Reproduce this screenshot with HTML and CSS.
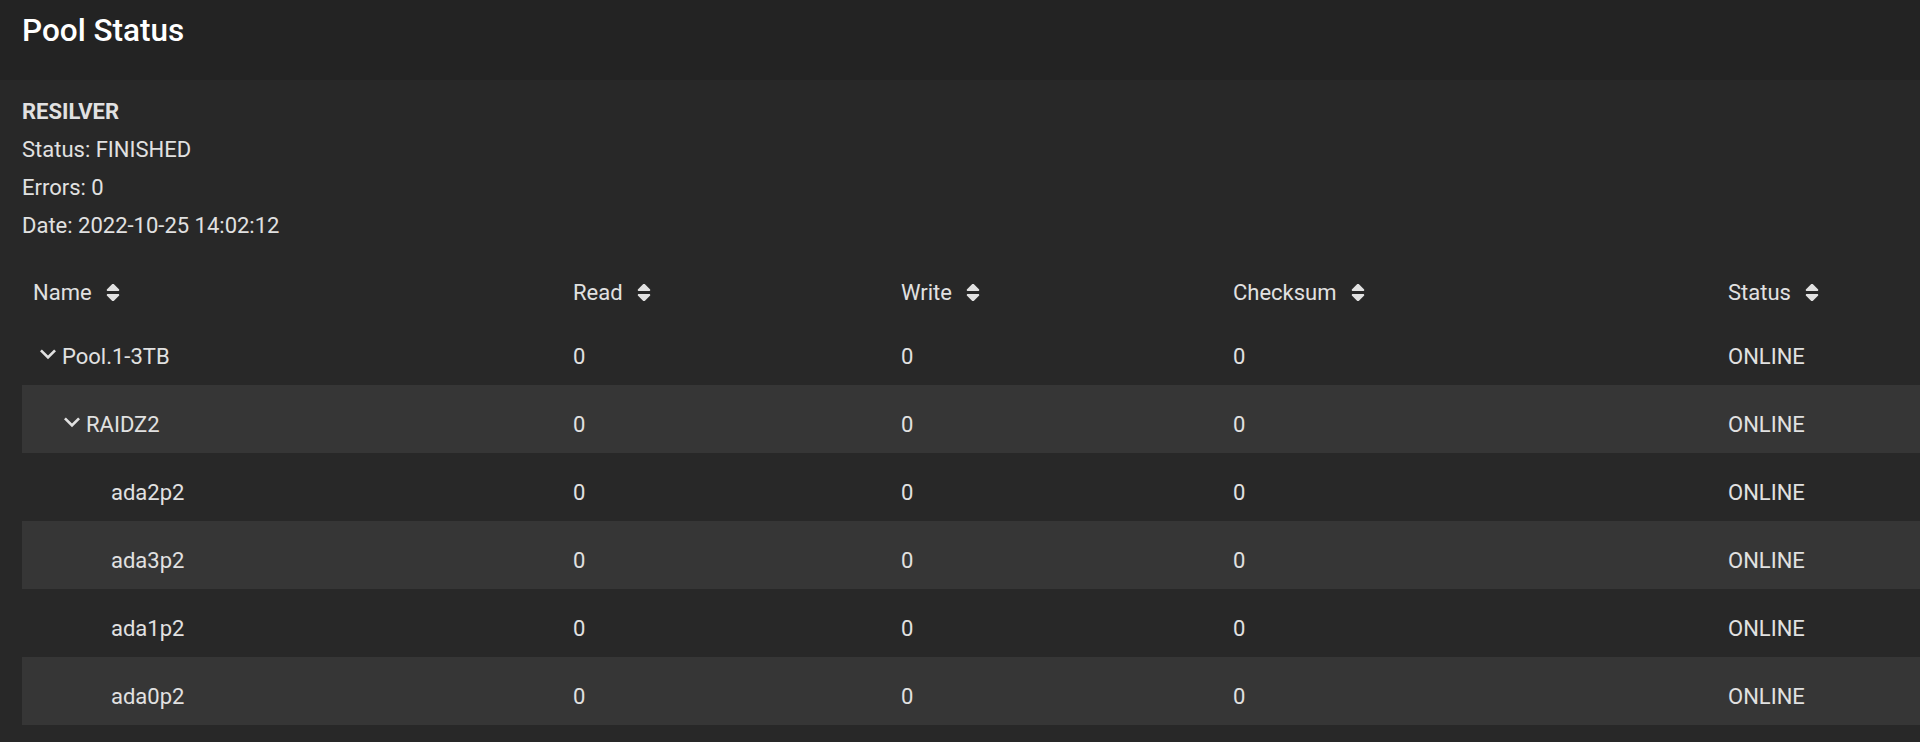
FILE: index.html
```html
<!DOCTYPE html>
<html lang="en">
<head>
<meta charset="utf-8">
<title>Pool Status</title>
<link rel="stylesheet" href="styles.css">
</head>
<body>
<header class="topbar">
  <h1 class="title">Pool Status</h1>
</header>
<main class="content">
  <section class="scan">
    <div class="scan-type">RESILVER</div>
    <div class="scan-line">Status: FINISHED</div>
    <div class="scan-line">Errors: 0</div>
    <div class="scan-line">Date: 2022-10-25 14:02:12</div>
  </section>
  <div class="table">
    <div class="row head">
      <div class="cell">Name<svg class="sort" viewBox="0 64 320 384"><path d="M41 288h238c21.4 0 32.1 25.9 17 41L177 448c-9.4 9.4-24.6 9.4-33.900 0L24 329c-15.1-15.1-4.4-41 17-41zm255-105L177 64c-9.4-9.4-24.6-9.4-33.9 0L24 183c-15.1 15.1-4.4 41 17 41h238c21.4 0 32.1-25.9 17-41z"/></svg></div>
      <div class="cell">Read<svg class="sort" viewBox="0 64 320 384"><path d="M41 288h238c21.4 0 32.1 25.9 17 41L177 448c-9.4 9.4-24.6 9.4-33.900 0L24 329c-15.1-15.1-4.4-41 17-41zm255-105L177 64c-9.4-9.4-24.6-9.4-33.9 0L24 183c-15.1 15.1-4.4 41 17 41h238c21.4 0 32.1-25.9 17-41z"/></svg></div>
      <div class="cell">Write<svg class="sort" viewBox="0 64 320 384"><path d="M41 288h238c21.4 0 32.1 25.9 17 41L177 448c-9.4 9.4-24.6 9.4-33.900 0L24 329c-15.1-15.1-4.4-41 17-41zm255-105L177 64c-9.4-9.4-24.6-9.4-33.9 0L24 183c-15.1 15.1-4.4 41 17 41h238c21.4 0 32.1-25.9 17-41z"/></svg></div>
      <div class="cell">Checksum<svg class="sort" viewBox="0 64 320 384"><path d="M41 288h238c21.4 0 32.1 25.9 17 41L177 448c-9.4 9.4-24.6 9.4-33.900 0L24 329c-15.1-15.1-4.4-41 17-41zm255-105L177 64c-9.4-9.4-24.6-9.4-33.9 0L24 183c-15.1 15.1-4.4 41 17 41h238c21.4 0 32.1-25.9 17-41z"/></svg></div>
      <div class="cell">Status<svg class="sort" viewBox="0 64 320 384"><path d="M41 288h238c21.4 0 32.1 25.9 17 41L177 448c-9.4 9.4-24.6 9.4-33.900 0L24 329c-15.1-15.1-4.4-41 17-41zm255-105L177 64c-9.4-9.4-24.6-9.4-33.9 0L24 183c-15.1 15.1-4.4 41 17 41h238c21.4 0 32.1-25.9 17-41z"/></svg></div>
    </div>

    <div class="row">
      <div class="cell name lvl0"><svg class="chev" viewBox="0 0 24 24"><path d="M16.59 8.59L12 13.17 7.41 8.59 6 10l6 6 6-6z"/></svg>Pool.1-3TB</div>
      <div class="cell">0</div><div class="cell">0</div><div class="cell">0</div><div class="cell">ONLINE</div>
    </div>
    <div class="row alt">
      <div class="cell name lvl1"><svg class="chev" viewBox="0 0 24 24"><path d="M16.59 8.59L12 13.17 7.41 8.59 6 10l6 6 6-6z"/></svg>RAIDZ2</div>
      <div class="cell">0</div><div class="cell">0</div><div class="cell">0</div><div class="cell">ONLINE</div>
    </div>
    <div class="row">
      <div class="cell name lvl2"><span class="spacer"></span>ada2p2</div>
      <div class="cell">0</div><div class="cell">0</div><div class="cell">0</div><div class="cell">ONLINE</div>
    </div>
    <div class="row alt">
      <div class="cell name lvl2"><span class="spacer"></span>ada3p2</div>
      <div class="cell">0</div><div class="cell">0</div><div class="cell">0</div><div class="cell">ONLINE</div>
    </div>
    <div class="row">
      <div class="cell name lvl2"><span class="spacer"></span>ada1p2</div>
      <div class="cell">0</div><div class="cell">0</div><div class="cell">0</div><div class="cell">ONLINE</div>
    </div>
    <div class="row alt">
      <div class="cell name lvl2"><span class="spacer"></span>ada0p2</div>
      <div class="cell">0</div><div class="cell">0</div><div class="cell">0</div><div class="cell">ONLINE</div>
    </div>
  </div>
</main>
</body>
</html>
```

FILE: styles.css
```css
html, body {
  margin: 0;
  padding: 0;
}

body {
  background: #282828;
  color: #e1e1e1;
  font-family: Roboto, "Liberation Sans", sans-serif;
  font-size: 22px;
  height: 742px;
  overflow: hidden;
}

.topbar {
  background: #232323;
  height: 80px;
  padding: 13px 22px 0;
  box-sizing: border-box;
}

.title {
  margin: 0;
  font-size: 31.5px;
  font-weight: 500;
  line-height: 36px;
  color: #ffffff;
}

.content {
  padding-top: 13px;
}

.scan {
  padding: 0 22px 4px;
}

.scan-type,
.scan-line {
  line-height: 38px;
}

.scan-type {
  font-weight: 700;
  font-size: 22px;
}

.table {
  margin-left: 22px;
}

.row {
  display: grid;
  grid-template-columns: 540px 328px 332px 495px 1fr;
  height: 68px;
}

.row.alt {
  background: #363636;
}

.cell {
  display: flex;
  align-items: center;
  padding: 27px 0 15px 11px;
  line-height: 26px;
  height: 26px;
  white-space: nowrap;
}

.row.head .cell {
  padding-top: 31px;
  padding-bottom: 11px;
}

.sort {
  width: 14px;
  height: 17px;
  margin-left: 14px;
  fill: #e1e1e1;
  position: relative;
  top: -1px;
}

.chev {
  width: 32px;
  height: 32px;
  margin-left: -1px;
  margin-right: -2px;
  fill: #e1e1e1;
  flex: none;
  position: relative;
  top: -3px;
}

.spacer {
  display: inline-block;
  width: 30px;
  flex: none;
}

.lvl1 {
  padding-left: 35px;
}

.lvl2 {
  padding-left: 59px;
}
```
